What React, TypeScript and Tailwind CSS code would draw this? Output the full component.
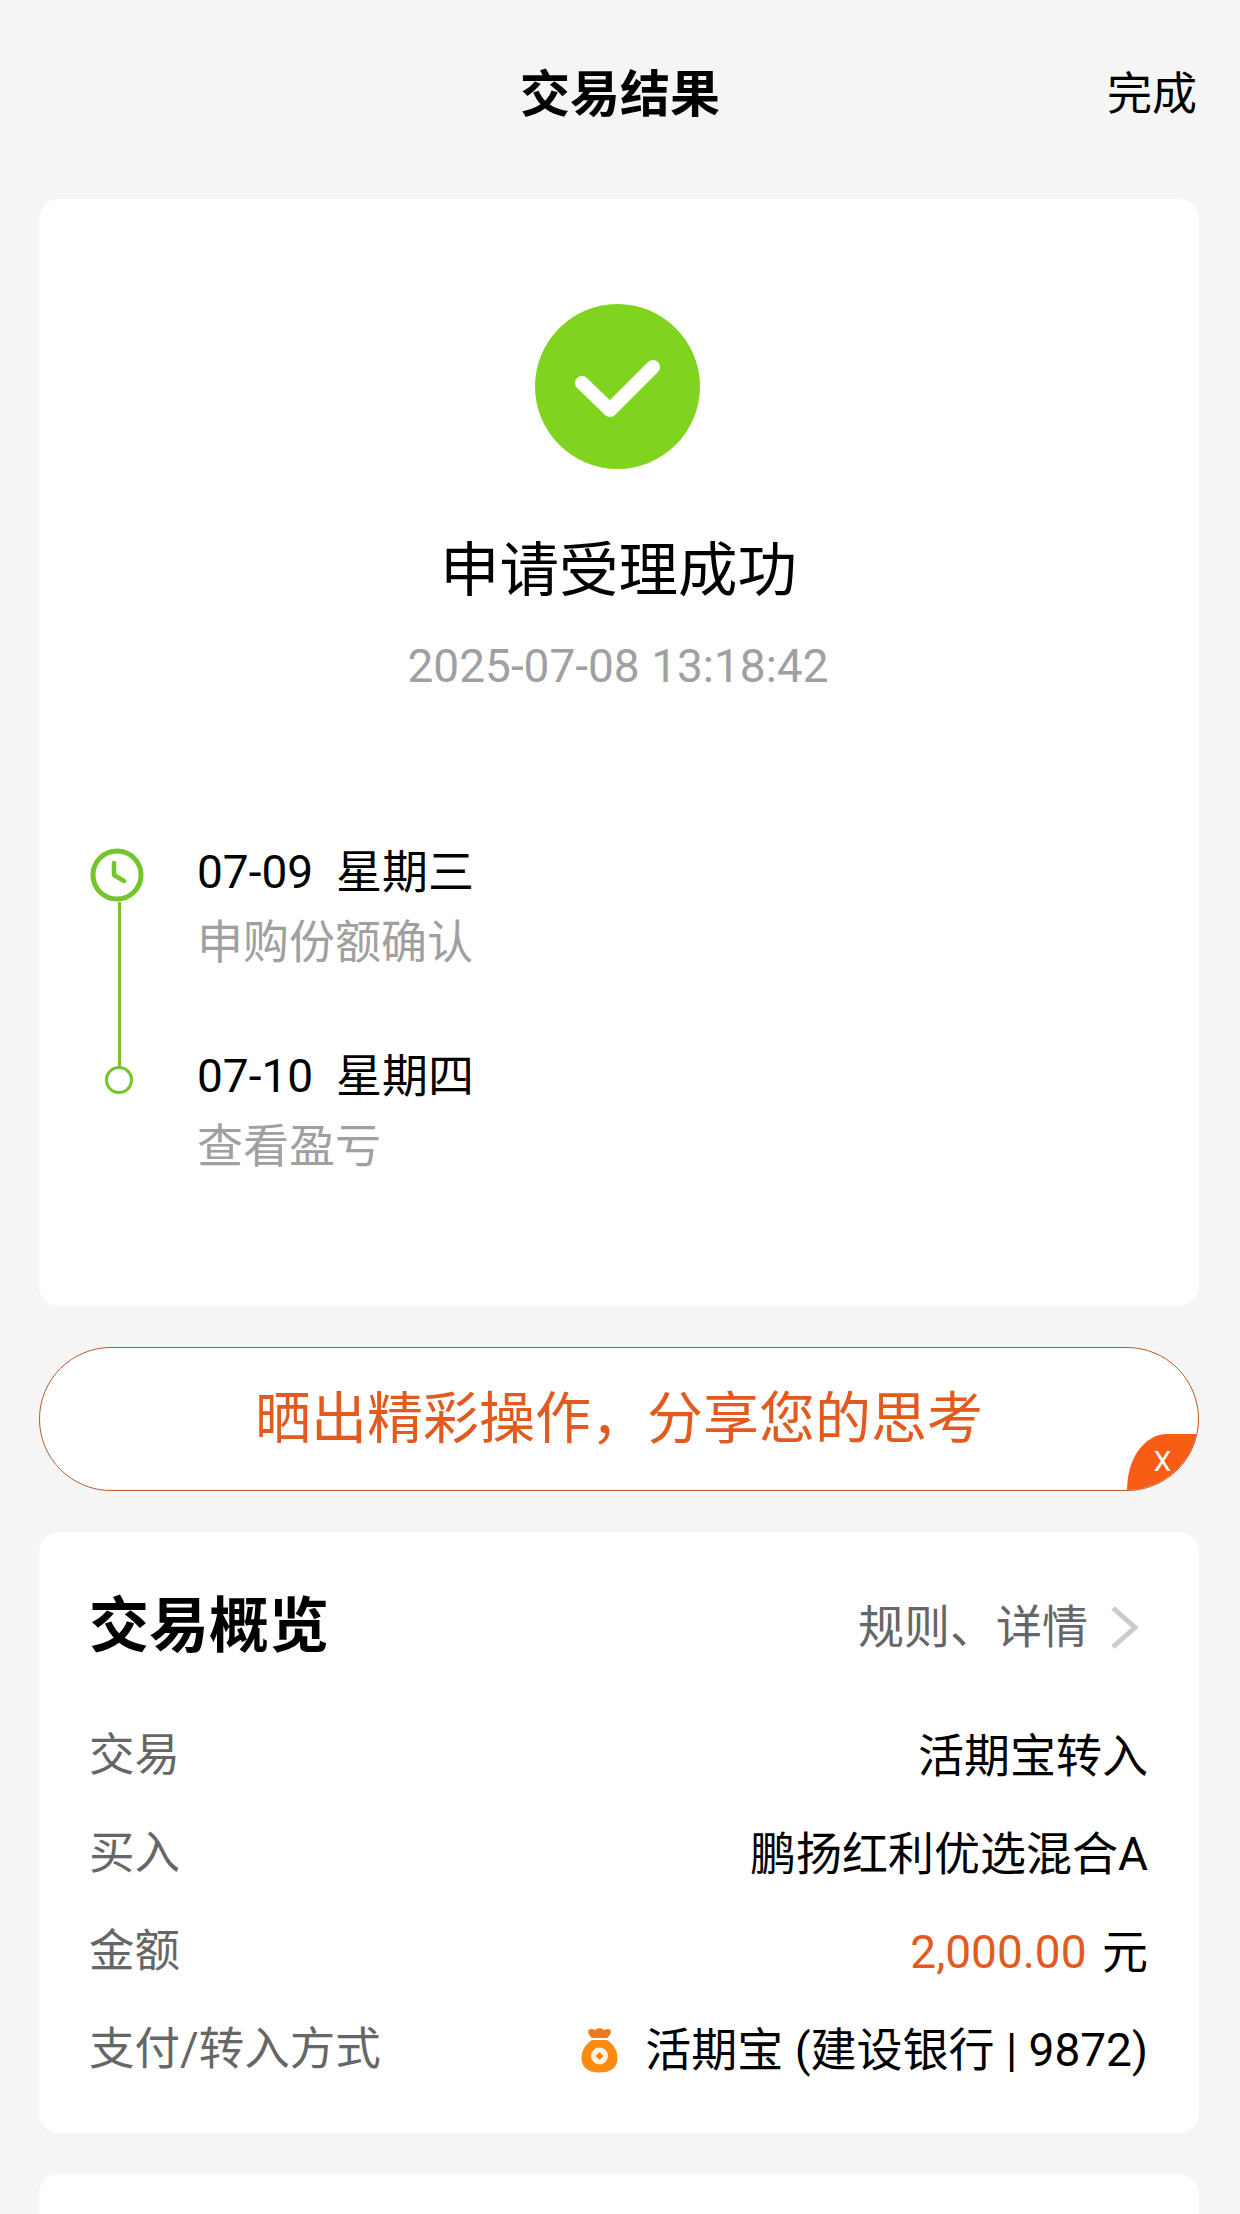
import React from 'react';

function BagIcon() {
  return (
    <svg width="37" height="46" viewBox="0 0 37 46" className="shrink-0">
      <path d="M8 2.500c3-1.500 5 .5 6.500 .5 1-2.500 7-2.500 8 0 1.500 0 3.500-2 6.500-.5 2 2 0 6.500-3 8.500H11C8 9 6 4.500 8 2.500Z" fill="#f0781e" />
      <path d="M11 13h15c6 4 10.500 10 10.500 18 0 10-7 14.500-18 14.500S.5 41 .5 31C.5 23 5 17 11 13Z" fill="#fb8a10" />
      <circle cx="18.500" cy="29" r="8.500" fill="#fff3e0" />
      <path d="M18.500 25l4 4-4 4-4-4Z" fill="#f5860f" />
    </svg>
  );
}

const rows = [
  { label: '交易', value: <span>活期宝转入</span> },
  { label: '买入', value: <span>鹏扬红利优选混合A</span> },
  {
    label: '金额',
    value: (
      <span>
        <span className="mr-[4px] text-[#e25a1e]">2,000.00</span> 元
      </span>
    ),
  },
  {
    label: '支付/转入方式',
    value: (
      <span className="flex items-center">
        <BagIcon />
        <span className="ml-[27px]">活期宝 (建设银行 | 9872)</span>
      </span>
    ),
  },
];

export default function App() {
  return (
    <div className="h-[2214px] overflow-hidden bg-[#f5f5f5] font-['Roboto','Noto_Sans_CJK_SC',sans-serif] text-black">
      <header className="relative flex h-[199px] items-start justify-center pt-[66px]">
        <h1 className="text-[50px] leading-[58px] font-bold">交易结果</h1>
        <button className="absolute right-[43px] top-[66px] text-[45px] leading-[58px]">完成</button>
      </header>

      <main className="flex flex-col gap-[41px] pr-[41px] pl-[39px]">
        <section className="h-[1107px] rounded-[20px] bg-white">
          <div className="flex flex-col items-center pt-[105px]">
            <svg width="165" height="165" viewBox="0 0 165 165" className="-ml-[3px]">
              <circle cx="82.5" cy="82.5" r="82.5" fill="#80d41f" />
              <path d="M47 79l28 27 43-43" fill="none" stroke="#fff" strokeWidth="14" strokeLinecap="round" strokeLinejoin="round" />
            </svg>
            <h2 className="mt-[62px] -ml-[1px] text-[59.5px] leading-[80px]">申请受理成功</h2>
            <p className="mt-[29px] -ml-[2px] text-[46px] leading-[52px] text-[#a0a0a0]">2025-07-08 13:18:42</p>
          </div>

          <div className="mt-[156px] flex pl-[51px]">
            <div className="flex w-[107px] flex-col items-start">
              <svg width="54" height="54" viewBox="0 0 54 54">
                <circle cx="27" cy="27" r="24" fill="none" stroke="#73c52a" strokeWidth="5" />
                <path d="M24 15v12l10 6" fill="none" stroke="#73c52a" strokeWidth="4.5" strokeLinecap="round" strokeLinejoin="round" />
              </svg>
              <div className="ml-[28px] h-[164px] w-[3px] bg-[#73c52a]" />
              <div className="ml-[15px] h-[28px] w-[28px] rounded-full border-[3px] border-[#73c52a]" />
            </div>
            <div className="-mt-[6px] text-[46px] leading-[60px]">
              <div>07-09&nbsp;&nbsp;星期三</div>
              <div className="mt-[10px] text-[#a0a0a0]">申购份额确认</div>
              <div className="mt-[74px]">07-10&nbsp;&nbsp;星期四</div>
              <div className="mt-[10px] text-[#a0a0a0]">查看盈亏</div>
            </div>
          </div>
        </section>

        <section className="relative flex h-[144px] items-center justify-center overflow-hidden rounded-full border border-[#bb5a28] bg-white">
          <span className="text-[56px] leading-[70px] text-[#e25a1e]">晒出精彩操作，分享您的思考</span>
          <span className="absolute right-0 bottom-0 flex h-[56px] w-[71px] items-center justify-center rounded-tl-[40px_55px] bg-[#f85d15] text-[28px] text-white">
            X
          </span>
        </section>

        <section className="h-[601px] rounded-[20px] bg-white pt-[56px] pr-[51px] pl-[50px]">
          <div className="flex items-center justify-between">
            <h2 className="text-[60px] leading-[78px] font-bold">交易概览</h2>
            <div className="flex items-center text-[46px] text-[#666666]">
              规则、详情
              <svg width="29" height="45" viewBox="0 0 29 45" className="mr-[9px] ml-[22px]">
                <path d="M3 3l22 19.500L3 42" fill="none" stroke="#cccccc" strokeWidth="5" />
              </svg>
            </div>
          </div>
          <div className="mt-[60px] flex flex-col gap-[38px]">
            {rows.map((row) => (
              <div key={row.label} className="flex h-[60px] items-center justify-between text-[46px] leading-[60px]">
                <span className="text-[45.500px] text-[#666666]">{row.label}</span>
                {row.value}
              </div>
            ))}
          </div>
        </section>

        <section className="h-[100px] rounded-[20px] bg-white" />
      </main>
    </div>
  );
}
